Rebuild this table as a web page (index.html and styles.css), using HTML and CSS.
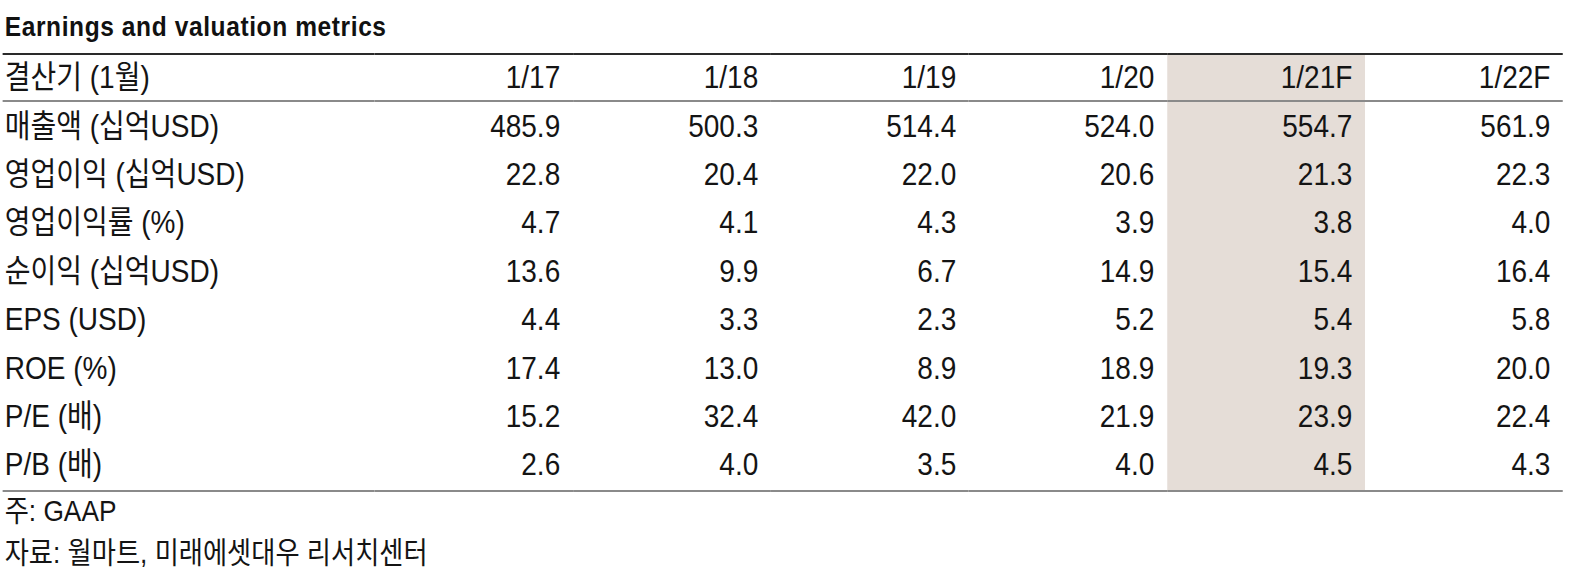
FILE: index.html
```html
<!DOCTYPE html>
<html lang="ko">
<head>
<meta charset="utf-8">
<title>Earnings and valuation metrics</title>
<link rel="stylesheet" href="styles.css">
</head>
<body>
<div class="page">
  <div class="sheet">
    <h1 class="title">Earnings and valuation metrics</h1>
    <table class="metrics">
      <colgroup>
        <col class="c-label">
        <col class="c-num"><col class="c-num"><col class="c-num"><col class="c-num"><col class="c-num"><col class="c-num">
      </colgroup>
      <thead>
        <tr>
          <th class="label">결산기 (1월)</th>
          <th>1/17</th><th>1/18</th><th>1/19</th><th>1/20</th><th class="hl">1/21F</th><th>1/22F</th>
        </tr>
      </thead>
      <tbody>
        <tr><td class="label">매출액 (십억USD)</td><td>485.9</td><td>500.3</td><td>514.4</td><td>524.0</td><td class="hl">554.7</td><td>561.9</td></tr>
        <tr><td class="label">영업이익 (십억USD)</td><td>22.8</td><td>20.4</td><td>22.0</td><td>20.6</td><td class="hl">21.3</td><td>22.3</td></tr>
        <tr><td class="label">영업이익률 (%)</td><td>4.7</td><td>4.1</td><td>4.3</td><td>3.9</td><td class="hl">3.8</td><td>4.0</td></tr>
        <tr><td class="label">순이익 (십억USD)</td><td>13.6</td><td>9.9</td><td>6.7</td><td>14.9</td><td class="hl">15.4</td><td>16.4</td></tr>
        <tr><td class="label">EPS (USD)</td><td>4.4</td><td>3.3</td><td>2.3</td><td>5.2</td><td class="hl">5.4</td><td>5.8</td></tr>
        <tr><td class="label">ROE (%)</td><td>17.4</td><td>13.0</td><td>8.9</td><td>18.9</td><td class="hl">19.3</td><td>20.0</td></tr>
        <tr><td class="label">P/E (배)</td><td>15.2</td><td>32.4</td><td>42.0</td><td>21.9</td><td class="hl">23.9</td><td>22.4</td></tr>
        <tr class="last"><td class="label">P/B (배)</td><td>2.6</td><td>4.0</td><td>3.5</td><td>4.0</td><td class="hl">4.5</td><td>4.3</td></tr>
      </tbody>
    </table>
    <div class="notes">
      <p>주: GAAP</p>
      <p>자료: 월마트, 미래에셋대우 리서치센터</p>
    </div>
  </div>
</div>
</body>
</html>
```
FILE: styles.css
```css
* { box-sizing: border-box; }
html, body { margin: 0; padding: 0; background: #fff; }
body {
  font-family: "Liberation Sans", Arial, "Noto Sans CJK KR", sans-serif;
  color: #141414;
}
/* outer frame clips the un-scaled layout width */
.page {
  width: 1580px;
  height: 584px;
  overflow: hidden;
}
/* the source typeface is a condensed grotesk: draw everything 12.5% narrower */
.sheet {
  width: 1786px;
  padding-left: 3.4px;
  transform: scaleX(0.875);
  transform-origin: 0 0;
}
.title {
  margin: 0;
  height: 53px;
  padding-top: 11px;
  padding-left: 2px;
  font-size: 28px;
  line-height: 32px;
  font-weight: bold;
  letter-spacing: 0.7px;
  color: #111;
}
.metrics {
  width: 1783px;
  border-collapse: collapse;
  table-layout: fixed;
  border-top: 2px solid #2a2a2a;
  border-bottom: 2px solid #8a8a8a;
  font-size: 32px;
}
.c-label { width: 425px; }
.c-num { width: 226.3px; }
.metrics th, .metrics td {
  padding: 0 14.5px 1px 0;
  text-align: right;
  font-weight: normal;
  white-space: nowrap;
  line-height: 36px;
}
.metrics thead th {
  height: 47px;
  border-bottom: 2px solid #8a8a8a;
}
.metrics tbody td { height: 48px; }
.metrics tbody tr:nth-child(odd) td { height: 49px; }
.metrics tbody tr.last td { height: 50px; padding-bottom: 3px; }
.metrics .label {
  text-align: left;
  padding-left: 2px;
}
.metrics .hl { background: #e5ddd7; }
.notes { margin-top: -2px; }
.notes p {
  margin: 0;
  font-size: 30px;
  line-height: 42px;
  padding-left: 2px;
}
```
